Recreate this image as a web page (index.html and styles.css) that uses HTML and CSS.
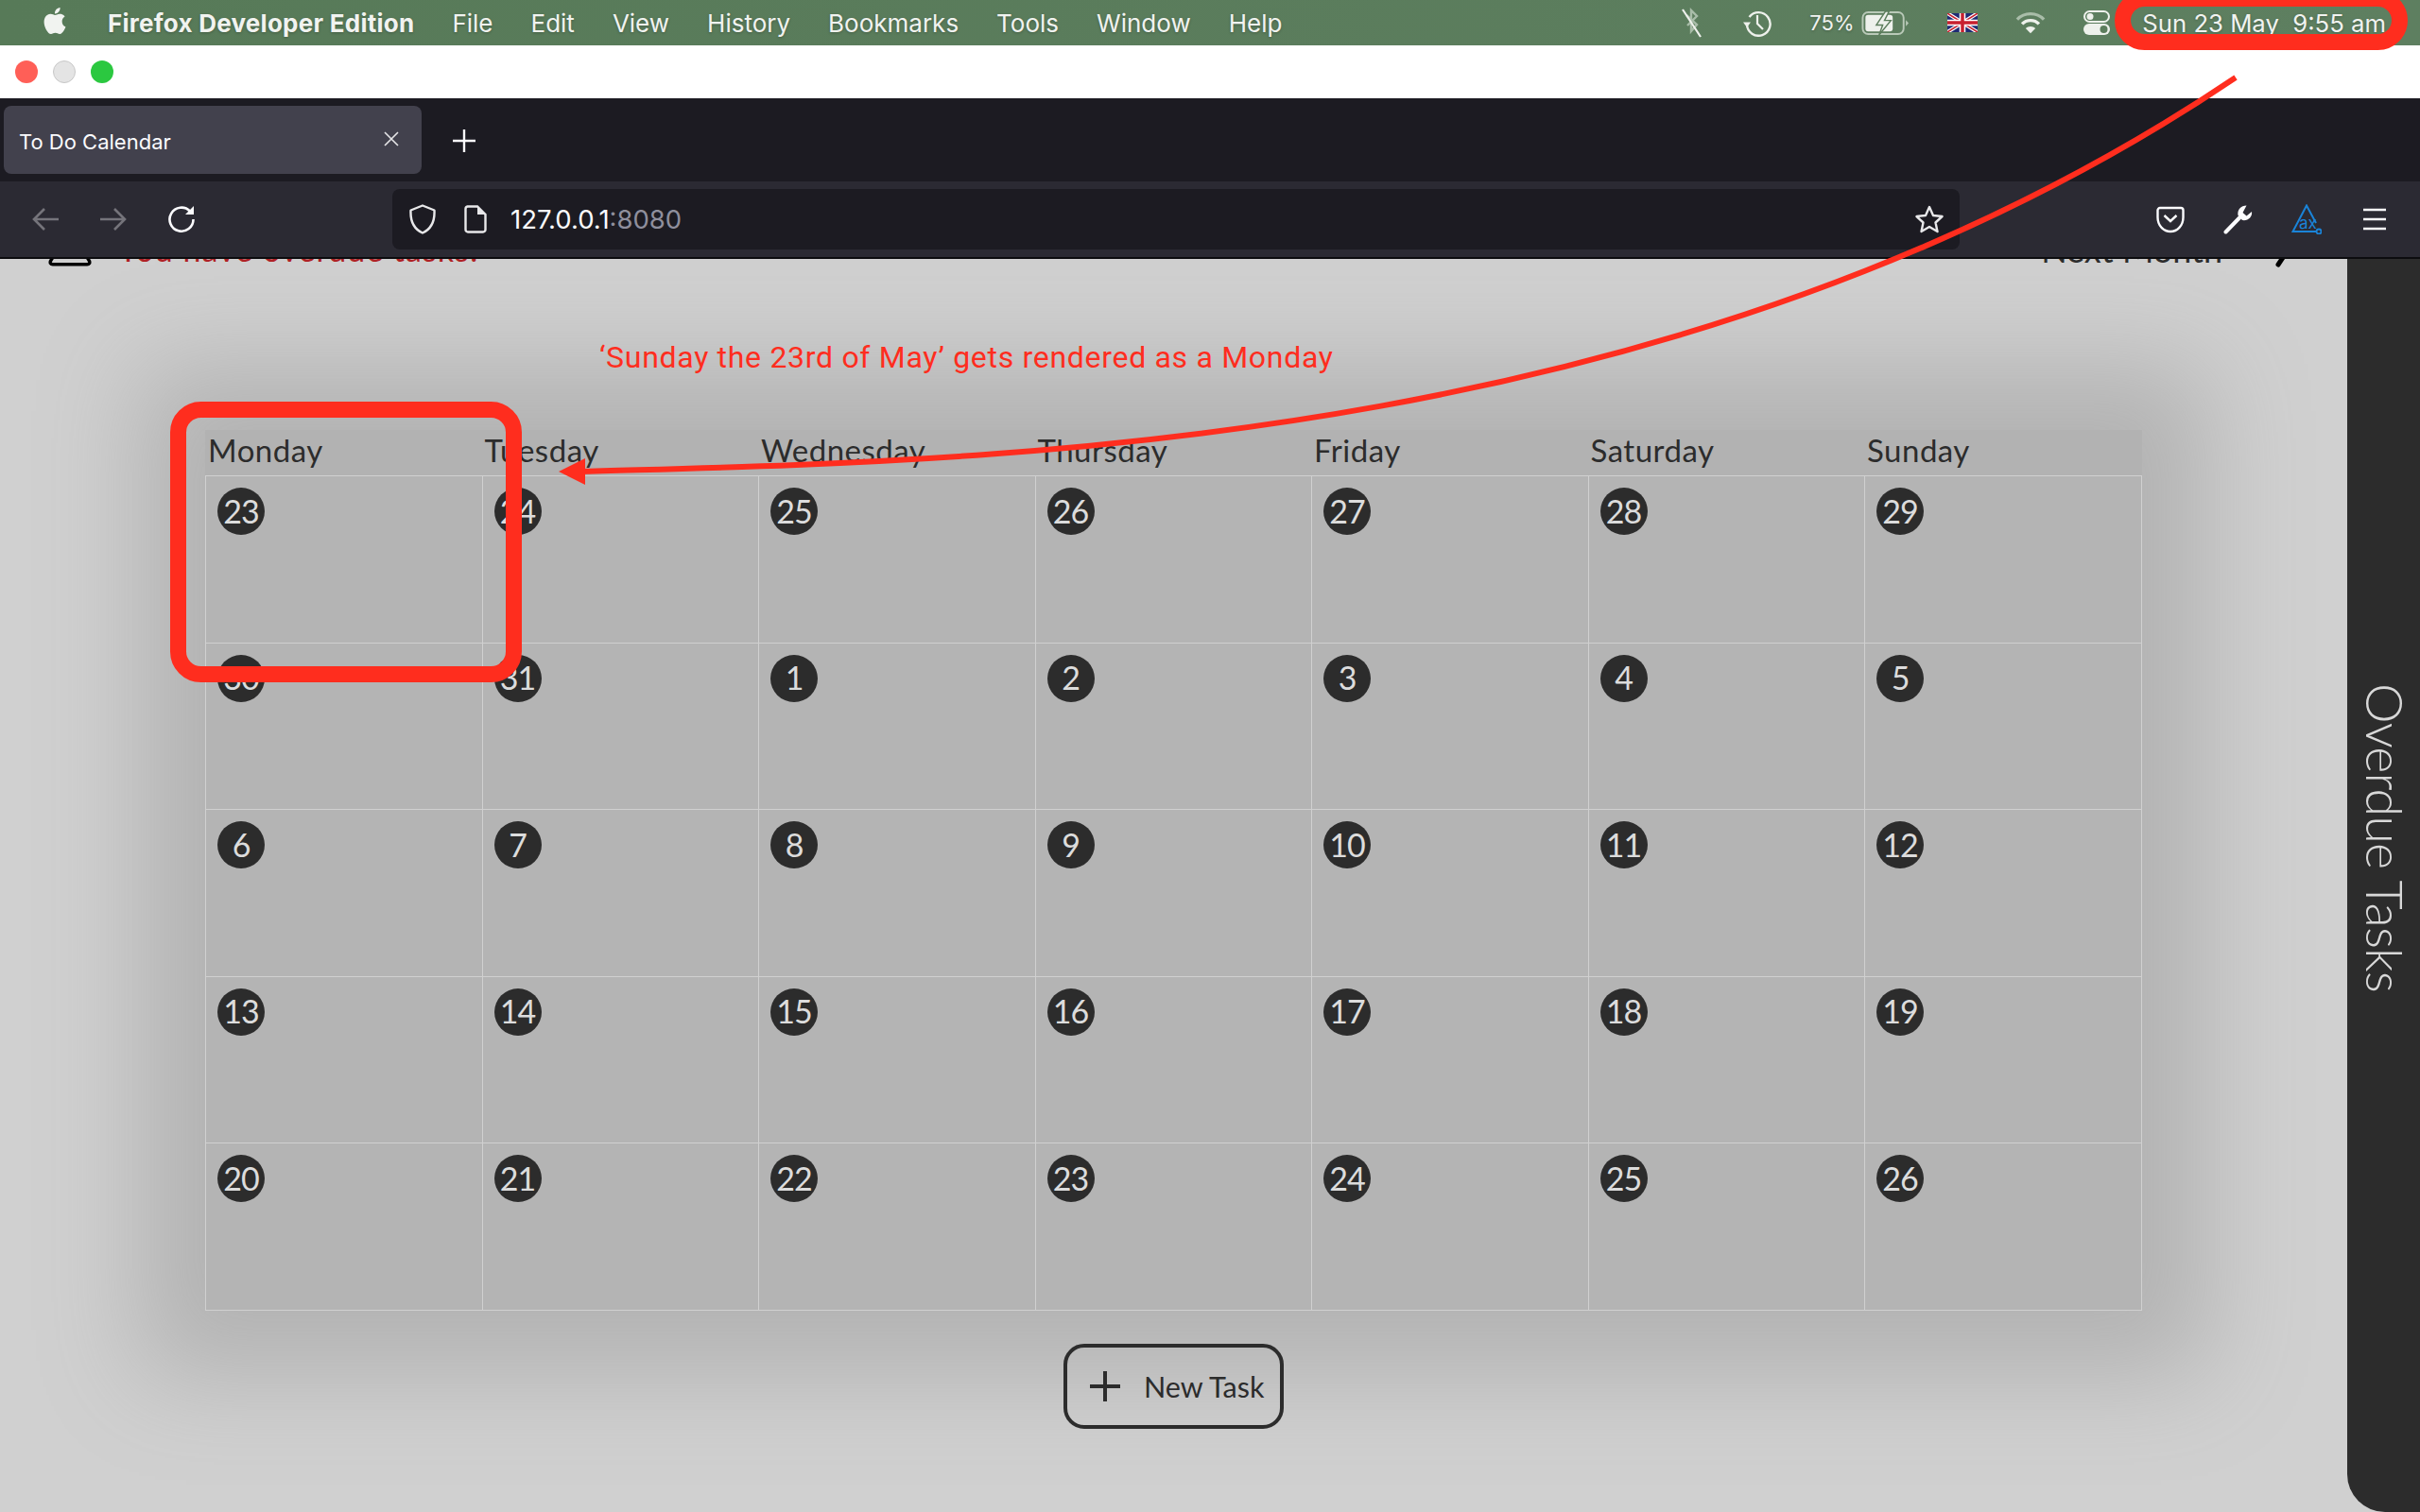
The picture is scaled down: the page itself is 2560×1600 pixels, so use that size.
FILE: index.html
```html
<!DOCTYPE html>
<html lang="en">
<head>
<meta charset="utf-8">
<title>To Do Calendar</title>
<link rel="stylesheet" href="styles.css">
</head>
<body>
<header class="menubar">
  <svg class="apple" viewBox="0 0 24 24"><path fill="#f1f3f0" d="M12.152 6.896c-.948 0-2.415-1.078-3.96-1.04-2.04.027-3.91 1.183-4.961 3.014-2.117 3.675-.546 9.103 1.519 12.09 1.013 1.454 2.208 3.09 3.792 3.039 1.52-.065 2.09-.987 3.935-.987 1.831 0 2.35.987 3.96.948 1.637-.026 2.676-1.48 3.676-2.948 1.156-1.688 1.636-3.325 1.662-3.415-.039-.013-3.182-1.221-3.22-4.857-.026-3.04 2.48-4.494 2.597-4.559-1.429-2.09-3.623-2.324-4.39-2.376-2-.156-3.675 1.09-4.61 1.09zM15.53 3.83c.843-1.012 1.4-2.427 1.245-3.83-1.207.052-2.662.805-3.532 1.818-.78.896-1.454 2.338-1.273 3.714 1.338.104 2.715-.688 3.559-1.701"/></svg>
  <nav class="menus">
    <span class="app-name">Firefox Developer Edition</span>
    <span>File</span><span>Edit</span><span>View</span><span>History</span><span>Bookmarks</span><span>Tools</span><span>Window</span><span>Help</span>
  </nav>
  <div class="status">
    <svg class="st-bt" viewBox="0 0 28 32"><path d="M8 8 L19 18 L13 25 V3 L19 9 L9 19" fill="none" stroke="#a9bda9" stroke-width="2.4"/><path d="M4 2 L23 31" stroke="#eef1ec" stroke-width="2.2"/></svg>
    <svg class="st-clock" viewBox="0 0 30 30"><path d="M6.5 9 A12.3 12.3 0 1 1 4 17" fill="none" stroke="#eef1ec" stroke-width="2.4"/><path d="M0 14.5 H8 L4 20 Z" fill="#eef1ec"/><path d="M15 7 V16 L21 22" fill="none" stroke="#eef1ec" stroke-width="2.2"/></svg>
    <div class="batt-group">
      <span class="pct">75%</span>
      <svg class="st-batt" viewBox="0 0 52 26"><rect x="1" y="1" width="45" height="24" rx="6" fill="none" stroke="#b9c9b8" stroke-width="2"/><rect x="4" y="4" width="30" height="18" rx="3" fill="#eef1ec"/><path d="M48.500 9.500 L51.500 13 L48.500 16.500 Z" fill="#b9c9b8"/><path d="M26 0 L16 15 H23 L19 26 L32 10 H25 L30 0 Z" fill="#eef1ec" stroke="#5c7d5c" stroke-width="1.500"/></svg>
    </div>
    <svg class="st-flag" viewBox="0 0 32 20"><rect width="32" height="20" fill="#1f2b74"/><path d="M0 0 L32 20 M32 0 L0 20" stroke="#fff" stroke-width="4"/><path d="M0 0 L32 20 M32 0 L0 20" stroke="#c8202f" stroke-width="1.500"/><path d="M16 0 V20 M0 10 H32" stroke="#fff" stroke-width="6.500"/><path d="M16 0 V20 M0 10 H32" stroke="#c8202f" stroke-width="3.500"/></svg>
    <svg class="st-wifi" viewBox="0 0 34 26"><path d="M2 9.500 C10 1 24 1 32 9.500" fill="none" stroke="#a9bda9" stroke-width="3.500"/><path d="M7.500 14.500 C12.500 9 21.500 9 26.500 14.500" fill="none" stroke="#eef1ec" stroke-width="3.500"/><path d="M17 25 L11.500 19.500 C14 16.500 20 16.500 22.500 19.500 Z" fill="#eef1ec"/></svg>
    <svg class="st-cc" viewBox="0 0 28 26"><rect x="1" y="1" width="26" height="11" rx="5.500" fill="none" stroke="#eef1ec" stroke-width="2"/><circle cx="7" cy="6.500" r="3.500" fill="#eef1ec"/><rect x="0" y="14" width="28" height="12" rx="6" fill="#eef1ec"/><circle cx="21.500" cy="20" r="4" fill="#5c7d5c"/></svg>
    <span class="time">Sun 23 May&nbsp; 9:55 am</span>
  </div>
</header>

<div class="titlebar">
  <span class="light light-close"></span>
  <span class="light light-min"></span>
  <span class="light light-max"></span>
</div>

<div class="tabstrip">
  <div class="tab">
    <span class="tab-title">To Do Calendar</span>
    <svg class="tab-close" viewBox="0 0 16 16"><path d="M1 1 L15 15 M15 1 L1 15" stroke="#e6e6e8" stroke-width="1.600"/></svg>
  </div>
  <svg class="tab-new" viewBox="0 0 24 24"><path d="M12 0 V24 M0 12 H24" stroke="#fbfbfe" stroke-width="2.400"/></svg>
</div>

<div class="toolbar">
  <svg class="tb-icon" viewBox="0 0 28 28"><path d="M28 14 H2 M13 3 L2 14 L13 25" fill="none" stroke="#75747b" stroke-width="2.600"/></svg>
  <svg class="tb-icon" viewBox="0 0 28 28"><path d="M0 14 H26 M15 3 L26 14 L15 25" fill="none" stroke="#75747b" stroke-width="2.600"/></svg>
  <svg class="tb-icon" viewBox="0 0 28 30"><path d="M23 6.500 A12.500 12.500 0 1 0 26.500 15" fill="none" stroke="#fbfbfe" stroke-width="2.600"/><path d="M27 1 V10 H18 Z" fill="#fbfbfe"/></svg>
  <div class="urlbar">
    <svg class="ub-shield" viewBox="0 0 28 32"><path d="M14 1.500 L26.500 6.500 C27 17 24 26 14 30.500 C4 26 1 17 1.500 6.500 Z" fill="none" stroke="#e8e8ea" stroke-width="2.400" stroke-linejoin="round"/></svg>
    <svg class="ub-page" viewBox="0 0 24 30"><path d="M3.500 1.500 H14 L22.500 10 V26 A2.500 2.500 0 0 1 20 28.500 H4 A2.500 2.500 0 0 1 1.500 26 V4 A2.500 2.500 0 0 1 3.500 1.500 Z" fill="none" stroke="#e8e8ea" stroke-width="2.400"/><path d="M14 1.500 L22.500 10 H14 Z" fill="#e8e8ea"/></svg>
    <span class="url"><span class="url-host">127.0.0.1</span><span class="url-port">:8080</span></span>
    <svg class="ub-star" viewBox="0 0 30 30"><path d="M15 2 L19 11 L28.500 12 L21.500 18.500 L23.500 28 L15 23 L6.500 28 L8.500 18.500 L1.500 12 L11 11 Z" fill="none" stroke="#e8e8ea" stroke-width="2.400" stroke-linejoin="round"/></svg>
  </div>
  <div class="tb-right">
    <svg class="tb-icon-r" viewBox="0 0 32 32"><path d="M5 4 H27 A2.500 2.500 0 0 1 29.500 6.500 V14 C29.500 23 23 29 16 29 C9 29 2.500 23 2.500 14 V6.500 A2.500 2.500 0 0 1 5 4 Z" fill="none" stroke="#fbfbfe" stroke-width="2.400"/><path d="M9.500 12 L16 18 L22.500 12" fill="none" stroke="#fbfbfe" stroke-width="2.400"/></svg>
    <svg class="tb-icon-r" viewBox="0 0 32 32"><path d="M2.500 29.500 L17 14.500" stroke="#fbfbfe" stroke-width="4" stroke-linecap="round"/><path d="M24.500 1.500 C18.500 1.500 14.500 6 15.500 12 L20 17 C26 18 31 13.500 30 8 L24.500 12.500 L20.500 9 Z" fill="#fbfbfe"/></svg>
    <svg class="tb-icon-r" viewBox="0 0 32 32"><path d="M26 20 L16 1.500 L1.500 29 H26" fill="none" stroke="#1a84d9" stroke-width="2"/><circle cx="29" cy="29" r="2.500" fill="none" stroke="#1a84d9" stroke-width="1.800"/><text class="ax-label" x="8" y="26">ax</text></svg>
    <svg class="tb-icon-r" viewBox="0 0 32 32"><path d="M4 6 H28 M4 16 H28 M4 26 H28" stroke="#fbfbfe" stroke-width="2.600"/></svg>
  </div>
</div>

<div class="viewport">
  <main class="main">
    <div class="notice-row">
      <div class="notice">
        <svg class="warn" viewBox="0 0 48 44"><path d="M24 3 L45.500 38 Q46.500 41.500 43 41.500 H5 Q1.500 41.500 2.500 38 Z" fill="none" stroke="#000" stroke-width="3.600" stroke-linejoin="round"/><circle cx="23.500" cy="32" r="2" fill="#000"/></svg>
        <span class="notice-text">You have overdue tasks!</span>
      </div>
      <div class="month-nav">
        <span class="month-text">Next Month</span>
        <svg class="chev" viewBox="0 0 20 48"><path d="M3 3 L17 24 L3 45" fill="none" stroke="#000" stroke-width="5" stroke-linecap="round"/></svg>
      </div>
    </div>

    <section class="calendar">
      <div class="weekdays">
        <span>Monday</span><span>Tuesday</span><span>Wednesday</span><span>Thursday</span><span>Friday</span><span>Saturday</span><span>Sunday</span>
      </div>
      <div class="days">
        <div class="day"><span class="num">23</span></div><div class="day"><span class="num">24</span></div><div class="day"><span class="num">25</span></div><div class="day"><span class="num">26</span></div><div class="day"><span class="num">27</span></div><div class="day"><span class="num">28</span></div><div class="day"><span class="num">29</span></div>
        <div class="day"><span class="num">30</span></div><div class="day"><span class="num">31</span></div><div class="day"><span class="num">1</span></div><div class="day"><span class="num">2</span></div><div class="day"><span class="num">3</span></div><div class="day"><span class="num">4</span></div><div class="day"><span class="num">5</span></div>
        <div class="day"><span class="num">6</span></div><div class="day"><span class="num">7</span></div><div class="day"><span class="num">8</span></div><div class="day"><span class="num">9</span></div><div class="day"><span class="num">10</span></div><div class="day"><span class="num">11</span></div><div class="day"><span class="num">12</span></div>
        <div class="day"><span class="num">13</span></div><div class="day"><span class="num">14</span></div><div class="day"><span class="num">15</span></div><div class="day"><span class="num">16</span></div><div class="day"><span class="num">17</span></div><div class="day"><span class="num">18</span></div><div class="day"><span class="num">19</span></div>
        <div class="day"><span class="num">20</span></div><div class="day"><span class="num">21</span></div><div class="day"><span class="num">22</span></div><div class="day"><span class="num">23</span></div><div class="day"><span class="num">24</span></div><div class="day"><span class="num">25</span></div><div class="day"><span class="num">26</span></div>
      </div>
    </section>

    <button class="new-task" type="button">
      <svg class="plus" viewBox="0 0 32 32"><path d="M16 0 V32 M0 16 H32" stroke="#2c2c2c" stroke-width="4"/></svg>
      <span>New Task</span>
    </button>
  </main>
  <aside class="sidebar"><span class="sidebar-title">Overdue Tasks</span></aside>
</div>

<svg class="marks" viewBox="0 0 2560 1600">
  <rect x="2245.500" y="-1.500" width="293" height="46" rx="23" fill="none" stroke="#ff2d1e" stroke-width="17"/>
  <rect x="188.500" y="433.500" width="355" height="280" rx="24" fill="none" stroke="#ff2d1e" stroke-width="17"/>
  <path d="M2365 82 C1765 487 1012 487 612 499" fill="none" stroke="#ff2d1e" stroke-width="6"/>
  <path d="M591 499 L619 485 V513 Z" fill="#ff2d1e"/>
</svg>
<div class="caption">‘Sunday the 23rd of May’ gets rendered as a Monday</div>
</body>
</html>
```

FILE: styles.css
```css
* { box-sizing: border-box; }
html, body { margin: 0; padding: 0; }
body {
  position: relative;
  width: 2560px;
  height: 1600px;
  overflow: hidden;
  display: flex;
  flex-direction: column;
  font-family: "Inter", "Liberation Sans", sans-serif;
  background: #d0d0d0;
}

/* macOS menu bar */
.menubar {
  height: 48px;
  flex: none;
  display: flex;
  align-items: center;
  padding: 0 36px 0 44px;
  background: linear-gradient(90deg, #577a58, #5e7f60);
  color: #f1f3f0;
  font-size: 26px;
  text-shadow: 0 1px 3px rgba(0, 0, 0, .25);
}
.apple { width: 28px; height: 32px; margin-top: -4px; }
.menus { display: flex; gap: 40px; margin-left: 42px; align-items: center; }
.app-name { font-weight: 700; letter-spacing: .25px; }
.status { margin-left: auto; display: flex; align-items: center; gap: 40px; }
.st-bt { width: 28px; height: 32px; }
.st-clock { width: 30px; height: 30px; }
.batt-group { display: flex; align-items: center; gap: 9px; }
.pct { font-size: 22px; width: 46px; white-space: nowrap; }
.st-batt { width: 51px; height: 25px; }
.st-flag { width: 32px; height: 20px; }
.st-wifi { width: 32px; height: 26px; }
.st-cc { width: 28px; height: 26px; }
.time { margin-left: -6px; white-space: nowrap; font-size: 25.7px; }

/* Window chrome */
.titlebar {
  height: 56px;
  flex: none;
  display: flex;
  align-items: center;
  gap: 16px;
  padding-left: 16px;
  background: #fff;
}
.light { width: 24px; height: 24px; border-radius: 50%; }
.light-close { background: #ff5f57; }
.light-min { background: #e4e4e4; border: 1px solid #c8c8c8; }
.light-max { background: #2bc840; }

.tabstrip {
  height: 88px;
  flex: none;
  display: flex;
  align-items: center;
  padding-left: 4px;
  background: #1c1b22;
}
.tab {
  width: 442px;
  height: 72px;
  display: flex;
  align-items: center;
  justify-content: space-between;
  padding: 0 24px 0 16px;
  border-radius: 8px;
  background: #42414d;
  color: #fbfbfe;
  font-size: 22px;
}
.tab-title { padding-top: 3px; }
.tab-close { width: 16px; height: 16px; margin-top: -2px; }
.tab-new { width: 24px; height: 24px; margin: 2px 0 0 33px; }

.toolbar {
  height: 82px;
  flex: none;
  display: flex;
  align-items: center;
  padding: 0 32px 0 34px;
  gap: 44px;
  background: #2b2a33;
  border-bottom: 2px solid #0c0c0f;
}
.tb-icon { width: 28px; height: 30px; flex: none; }
.urlbar {
  width: 1658px;
  height: 64px;
  flex: none;
  margin-left: 165px;
  display: flex;
  align-items: center;
  padding: 0 17px 0 18px;
  border-radius: 8px;
  background: #1c1b22;
}
.ub-shield { width: 28px; height: 32px; flex: none; }
.ub-page { width: 24px; height: 30px; flex: none; margin-left: 30px; }
.url { margin-left: 25px; font-size: 27.5px; }
.url-host { color: #fbfbfe; }
.url-port { color: #8f8f9d; }
.ub-star { width: 30px; height: 30px; flex: none; margin-left: auto; }
.tb-right { margin-left: auto; display: flex; gap: 40px; }
.tb-icon-r { width: 32px; height: 32px; flex: none; }
.ax-label { fill: #1a84d9; font-size: 17px; }

/* Page */
.viewport {
  flex: 1;
  min-height: 0;
  display: flex;
  overflow: hidden;
  background: #d0d0d0;
}
.main {
  flex: 1;
  display: flex;
  flex-direction: column;
  align-items: center;
}
.notice-row {
  align-self: stretch;
  flex: none;
  height: 50px;
  margin-top: -34px;
  display: flex;
  justify-content: space-between;
  align-items: flex-start;
  padding: 0 56px 0 51px;
}
.notice { display: flex; align-items: flex-start; gap: 28px; }
.warn { width: 46px; height: 44px; flex: none; margin-top: -1px; }
.notice-text {
  font-family: "Lato", sans-serif;
  font-size: 34px;
  line-height: 48px;
  letter-spacing: 1px;
  color: #b02024;
  white-space: nowrap;
}
.month-nav { display: flex; align-items: flex-start; gap: 56px; }
.month-text {
  font-family: "Lato", sans-serif;
  font-size: 36px;
  line-height: 48px;
  color: #2c2c2c;
  white-space: nowrap;
}
.chev { width: 20px; height: 48px; flex: none; margin-top: -5px; }

.calendar {
  flex: none;
  width: 2049px;
  margin-top: 165px;
  background: #b4b4b4;
  box-shadow: 0 0 100px 70px #b3b3b3;
  font-family: "Lato", sans-serif;
  color: #2c2c2c;
}
.weekdays {
  height: 48px;
  display: grid;
  grid-template-columns: repeat(7, 292.5px);
  align-items: center;
  background: #b2b2b2;
  font-size: 33px;
  letter-spacing: .5px;
}
.weekdays span { padding: 0 0 6px 3px; line-height: 40px; }
.days {
  display: grid;
  grid-template-columns: repeat(7, 292.5px);
  grid-auto-rows: 176.6px;
  border-right: 1px solid #d0d0d0;
  border-bottom: 1px solid #d0d0d0;
}
.day {
  padding: 12px;
  border-left: 1px solid #d0d0d0;
  border-top: 1px solid #d0d0d0;
}
.num {
  display: flex;
  align-items: center;
  justify-content: center;
  width: 50px;
  height: 50px;
  padding-bottom: 2px;
  border-radius: 50%;
  background: #2c2c2c;
  color: #dcdcdc;
  font-size: 34px;
  font-weight: 400;
  letter-spacing: -1px;
}

.new-task {
  flex: none;
  width: 233px;
  height: 90px;
  margin-top: 35px;
  display: flex;
  align-items: center;
  gap: 25px;
  padding: 0 0 0 24px;
  border: 4px solid #2c2c2c;
  border-radius: 22px;
  background: transparent;
  color: #2c2c2c;
  font-family: "Lato", sans-serif;
  font-size: 30.5px;
  white-space: nowrap;
}
.plus { width: 32px; height: 32px; flex: none; }

.sidebar {
  flex: none;
  width: 77px;
  padding: 449px 0 0 3px;
  display: flex;
  justify-content: center;
  align-items: flex-start;
  background: #2c2c2c;
  border-bottom-left-radius: 40px;
}
.sidebar-title {
  writing-mode: vertical-rl;
  font-family: "Lato", sans-serif;
  font-size: 54px;
  font-weight: 300;
  line-height: 1;
  letter-spacing: -.85px;
  color: #d8d8d8;
  white-space: nowrap;
}

/* Annotations drawn over the screenshot */
.marks {
  position: absolute;
  left: 0;
  top: 0;
  width: 2560px;
  height: 1600px;
  pointer-events: none;
}
.caption {
  position: absolute;
  left: 634px;
  top: 359px;
  font-family: "Roboto", "Liberation Sans", sans-serif;
  font-size: 32px;
  line-height: 38px;
  letter-spacing: .7px;
  color: #ff2d1e;
  white-space: nowrap;
}
```
